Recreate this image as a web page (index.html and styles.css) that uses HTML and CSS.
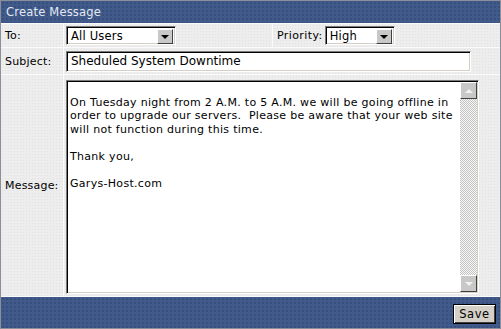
FILE: index.html
```html
<!DOCTYPE html>
<html lang="en">
<head>
    <meta charset="UTF-8">
    <title>Create Message</title>
    <link rel="stylesheet" href="styles.css">
</head>
<body>
    <div class="panel">
        <div class="panel-title">Create Message</div>

        <div class="form">
            <div class="label">To:</div>
            <div class="field field-split">
                <div class="subcell">
                    <div class="select select-to">
                        <span class="select-value">All Users</span>
                        <span class="select-btn"><span class="arrow-down"></span></span>
                    </div>
                </div>
                <div class="subcell subcell-priority">
                    <span class="inline-label">Priority:</span>
                    <div class="select select-priority">
                        <span class="select-value">High</span>
                        <span class="select-btn"><span class="arrow-down"></span></span>
                    </div>
                </div>
            </div>

            <div class="label">Subject:</div>
            <div class="field field-subject">
                <div class="textbox">Sheduled System Downtime</div>
            </div>

            <div class="label label-message">Message:</div>
            <div class="field field-message">
                <div class="memo">
                    <div class="memo-text">
<br>On Tuesday night from 2 A.M. to 5 A.M. we will be going offline in order to upgrade our servers.&nbsp; Please be aware that your web site will not function during this time.<br><br>Thank you,<br><br>Garys-Host.com
                    </div>
                    <div class="scrollbar">
                        <span class="scroll-btn"><span class="arrow-up-dim"></span></span>
                        <span class="scroll-track"></span>
                        <span class="scroll-btn"><span class="arrow-down-dim"></span></span>
                    </div>
                </div>
            </div>
        </div>

        <div class="panel-footer">
            <button class="save-btn">Save</button>
        </div>
    </div>
</body>
</html>
```

FILE: styles.css
```css
* {
    box-sizing: border-box;
    margin: 0;
    padding: 0;
}

body {
    font-family: "DejaVu Sans", Verdana, sans-serif;
    font-size: 11px;
    color: #000;
    background: #fff;
}

.panel {
    width: 501px;
    height: 329px;
    border: 1px solid #8a8f99;
    background: #fbfbfb;
    display: flex;
    flex-direction: column;
    gap: 1px;
}

.panel-title,
.panel-footer {
    background-color: #405a89;
    background-image: radial-gradient(circle, #33497a 0.6px, transparent 0.9px);
    background-size: 4px 4px;
}

.panel-title {
    height: 22px;
    line-height: 22px;
    padding-left: 5px;
    color: #e4e9f2;
    font-size: 11.5px;
    letter-spacing: 0.2px;
}

.form {
    display: grid;
    grid-template-columns: 62px 1fr;
    grid-template-rows: 23px 26px 221px;
    gap: 1px;
}

.label,
.field,
.subcell {
    background-color: #ededed;
    background-image: radial-gradient(circle, #e2e2e2 0.6px, transparent 0.9px);
    background-size: 3px 3px;
}

.label {
    display: flex;
    align-items: center;
    padding-left: 4px;
    letter-spacing: 0.2px;
}

.field-split {
    display: grid;
    grid-template-columns: 208px 1fr;
    gap: 1px;
    background: #fbfbfb;
}

.subcell {
    padding: 2px 0 0 2px;
}

.subcell-priority {
    display: flex;
    align-items: flex-start;
    padding-left: 4px;
}

.inline-label {
    line-height: 19px;
    margin-right: 2px;
    letter-spacing: 0.4px;
}

.select,
.textbox,
.memo {
    background: #fff;
    border-style: solid;
    border-width: 1px;
    border-color: #7a7a7a #fff #fff #7a7a7a;
    box-shadow: inset 1px 1px 0 #000, inset -1px -1px 0 #d4d0c8;
}

.select {
    display: flex;
    height: 19px;
    padding: 2px;
}

.select-to {
    width: 110px;
}

.select-priority {
    width: 70px;
}

.select-value {
    flex: 1;
    line-height: 15px;
    padding-left: 2px;
    font-size: 11.5px;
    letter-spacing: 0.2px;
}

.select-btn,
.scroll-btn {
    width: 16px;
    height: 15px;
    background: #c8c8c8;
    border-style: solid;
    border-width: 1px;
    border-color: #fff #404040 #404040 #fff;
    display: flex;
    align-items: center;
    justify-content: center;
}

.arrow-down {
    width: 0;
    height: 0;
    border-left: 4px solid transparent;
    border-right: 4px solid transparent;
    border-top: 4px solid #000;
}

.arrow-up-dim,
.arrow-down-dim {
    width: 0;
    height: 0;
    border-left: 4px solid transparent;
    border-right: 4px solid transparent;
}

.arrow-up-dim {
    border-bottom: 4px solid #f2f2f2;
}

.arrow-down-dim {
    border-top: 4px solid #f2f2f2;
}

.field-subject {
    padding: 3px 0 0 2px;
}

.textbox {
    width: 405px;
    height: 21px;
    line-height: 19px;
    padding-left: 4px;
    font-size: 12px;
}

.field-message {
    padding: 5px 0 0 2px;
}

.memo {
    width: 413px;
    height: 214px;
    display: flex;
    padding: 1px 1px 1px 2px;
}

.memo-text {
    flex: 1;
    padding: 0 2px 0 1px;
    line-height: 13.5px;
    letter-spacing: 0.3px;
}

.scrollbar {
    width: 17px;
    display: flex;
    flex-direction: column;
}

.scrollbar .scroll-btn {
    width: 17px;
    height: 17px;
}

.scroll-track {
    flex: 1;
    background-image: repeating-conic-gradient(#c4c4c4 0 25%, #f6f6f6 0 50%);
    background-size: 2px 2px;
}

.panel-footer {
    flex: 1;
    display: flex;
    justify-content: flex-end;
    align-items: flex-start;
    padding: 7px 4px 0 0;
}

.save-btn {
    width: 43px;
    height: 20px;
    font-family: "DejaVu Sans", Verdana, sans-serif;
    font-size: 11.5px;
    letter-spacing: 0.6px;
    background: #d4d0c8;
    border: 1px solid #000;
    box-shadow: inset 1px 1px 0 #fff, inset -1px -1px 0 #404040;
    color: #000;
}
```
